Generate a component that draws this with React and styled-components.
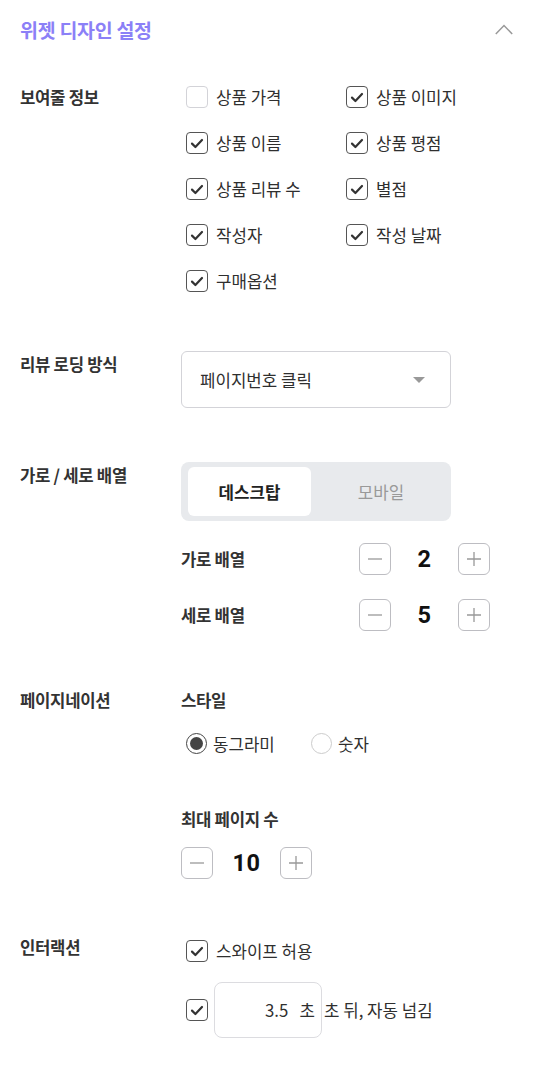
import React from "react";
import styled, { createGlobalStyle } from "styled-components";

const Global = createGlobalStyle`
  html, body { margin: 0; padding: 0; background: #fff; }
  body { font-family: "Noto Sans CJK KR", "Noto Sans", sans-serif; color: #333; }
  * { box-sizing: border-box; }
`;

const Page = styled.div`
  width: 536px;
  padding: 0 20px 40px 20px;
`;

const Header = styled.div`
  height: 60px;
  display: flex;
  align-items: center;
  justify-content: space-between;
`;

const Title = styled.h2`
  margin: 0;
  font-size: 19.5px;
  font-weight: 700;
  line-height: 24px;
  color: #8b80f7;
  letter-spacing: -0.3px;
`;

const Chevron = styled.svg`
  margin-right: 3px;
  margin-top: -2px;
`;

const Section = styled.section`
  display: grid;
  grid-template-columns: 161px 1fr;
  margin-top: ${(p) => p.$mt}px;
`;

const SectionLabel = styled.div`
  font-size: 16.7px;
  font-weight: 700;
  line-height: 22px;
  color: #333;
  margin-top: ${(p) => p.$mt || 0}px;
  letter-spacing: -0.3px;
  white-space: nowrap;
`;

const Content = styled.div`
  display: flex;
  flex-direction: column;
`;

const CheckGrid = styled.div`
  display: grid;
  grid-template-columns: 160px 160px;
  row-gap: 24px;
  padding-left: 5px;
`;

const CheckItem = styled.label`
  display: flex;
  align-items: center;
  gap: 8px;
  height: 22px;
  font-size: 16.8px;
  line-height: 22px;
  color: #2f2f2f;
  white-space: nowrap;
`;

const Box = styled.span`
  width: 22px;
  height: 22px;
  flex: none;
  border-radius: 4px;
  border: ${(p) => (p.$checked ? "1.5px solid #555" : "1px solid #d3d3d8")};
  display: flex;
  align-items: center;
  justify-content: center;
  background: #fff;
`;

function Checkbox({ checked }) {
  return (
    <Box $checked={checked}>
      {checked && (
        <svg width="14" height="11" viewBox="0 0 14 11">
          <path d="M2 5.6 L5.4 9 L12 2" fill="none" stroke="#333" strokeWidth="2.2" strokeLinecap="round" strokeLinejoin="round" />
        </svg>
      )}
    </Box>
  );
}

const Select = styled.div`
  width: 270px;
  height: 57px;
  border: 1px solid #d3d3d8;
  border-radius: 6px;
  display: flex;
  align-items: center;
  justify-content: space-between;
  padding: 0 25px 0 18px;
  font-size: 16.8px;
  color: #2f2f2f;
`;

const Caret = styled.span`
  width: 0;
  height: 0;
  border-left: 6px solid transparent;
  border-right: 6px solid transparent;
  border-top: 6px solid #999;
`;

const Segmented = styled.div`
  width: 270px;
  height: 59px;
  background: #e8eaed;
  border-radius: 8px;
  padding: 5px 0 5px 7px;
  display: grid;
  grid-template-columns: 123px 1fr;
`;

const SegButton = styled.div`
  display: flex;
  align-items: center;
  justify-content: center;
  border-radius: 6px;
  font-size: 16.8px;
  background: ${(p) => (p.$active ? "#fff" : "transparent")};
  color: ${(p) => (p.$active ? "#222" : "#999")};
  font-weight: ${(p) => (p.$active ? 700 : 400)};
`;

const StepperRows = styled.div`
  display: flex;
  flex-direction: column;
  gap: 24px;
  margin-top: 22px;
`;

const StepperRow = styled.div`
  display: grid;
  grid-template-columns: 178px auto;
  align-items: center;
`;

const SubLabel = styled.div`
  font-size: 16.7px;
  font-weight: 700;
  line-height: 22px;
  color: #333;
  letter-spacing: -0.3px;
  margin-top: ${(p) => p.$mt || 0}px;
`;

const StepperWrap = styled.div`
  display: flex;
  align-items: center;
  margin-top: ${(p) => p.$mt || 0}px;
`;

const StepBtn = styled.button`
  width: 32px;
  height: 32px;
  padding: 0;
  border: 1px solid #bdbdc2;
  border-radius: 6px;
  background: #fff;
  display: flex;
  align-items: center;
  justify-content: center;
`;

const StepValue = styled.div`
  width: 67px;
  text-align: center;
  font-family: Roboto, "Noto Sans CJK KR", sans-serif;
  font-size: 23.5px;
  font-weight: 700;
  letter-spacing: 0.6px;
  color: #111;
  line-height: 32px;
`;

function Stepper({ value, mt }) {
  return (
    <StepperWrap $mt={mt}>
      <StepBtn>
        <svg width="18" height="18" viewBox="0 0 18 18">
          <path d="M2 9 H16" stroke="#999" strokeWidth="1.3" />
        </svg>
      </StepBtn>
      <StepValue>{value}</StepValue>
      <StepBtn>
        <svg width="18" height="18" viewBox="0 0 18 18">
          <path d="M2 9 H16 M9 2 V16" stroke="#999" strokeWidth="1.3" />
        </svg>
      </StepBtn>
    </StepperWrap>
  );
}

const RadioRow = styled.div`
  display: grid;
  grid-template-columns: 125px auto;
  padding-left: 5px;
  margin-top: 22px;
`;

const RadioItem = styled.label`
  display: flex;
  align-items: center;
  gap: 6px;
  height: 21px;
  font-size: 16.8px;
  color: #2f2f2f;
`;

const RadioCircle = styled.span`
  width: 21px;
  height: 21px;
  border-radius: 50%;
  flex: none;
  border: ${(p) => (p.$checked ? "1.5px solid #444" : "1px solid #ccc")};
  display: flex;
  align-items: center;
  justify-content: center;
  &::after {
    content: "";
    display: ${(p) => (p.$checked ? "block" : "none")};
    width: 13px;
    height: 13px;
    border-radius: 50%;
    background: #444;
  }
`;

const InteractionList = styled.div`
  display: flex;
  flex-direction: column;
  gap: 20px;
  padding-left: 5px;
`;

const AutoRow = styled.div`
  display: flex;
  align-items: center;
  gap: 6px;
  font-size: 16.8px;
  color: #2f2f2f;
`;

const SecInput = styled.div`
  width: 108px;
  height: 56px;
  border: 1px solid #dcdce0;
  border-radius: 8px;
  display: flex;
  align-items: center;
  justify-content: flex-end;
  padding-right: 6px;
  font-size: 16.8px;
  color: #2f2f2f;
  white-space: pre;
`;

const AfterText = styled.span`
  margin-left: -4px;
  white-space: nowrap;
`;

export default function App() {
  return (
    <Page>
      <Global />
      <Header>
        <Title>위젯 디자인 설정</Title>
        <Chevron width="18" height="11" viewBox="0 0 18 11">
          <path d="M0.8 10 L9 1.6 L17.2 10" fill="none" stroke="#999" strokeWidth="1.5" />
        </Chevron>
      </Header>

      <Section $mt={26}>
        <SectionLabel>보여줄 정보</SectionLabel>
        <Content>
          <CheckGrid>
            <CheckItem><Checkbox />상품 가격</CheckItem>
            <CheckItem><Checkbox checked />상품 이미지</CheckItem>
            <CheckItem><Checkbox checked />상품 이름</CheckItem>
            <CheckItem><Checkbox checked />상품 평점</CheckItem>
            <CheckItem><Checkbox checked />상품 리뷰 수</CheckItem>
            <CheckItem><Checkbox checked />별점</CheckItem>
            <CheckItem><Checkbox checked />작성자</CheckItem>
            <CheckItem><Checkbox checked />작성 날짜</CheckItem>
            <CheckItem><Checkbox checked />구매옵션</CheckItem>
          </CheckGrid>
        </Content>
      </Section>

      <Section $mt={59}>
        <SectionLabel $mt={2}>리뷰 로딩 방식</SectionLabel>
        <Content>
          <Select>
            <span>페이지번호 클릭</span>
            <Caret />
          </Select>
        </Content>
      </Section>

      <Section $mt={54}>
        <SectionLabel $mt={2}>가로 / 세로 배열</SectionLabel>
        <Content>
          <Segmented>
            <SegButton $active>데스크탑</SegButton>
            <SegButton>모바일</SegButton>
          </Segmented>
          <StepperRows>
            <StepperRow>
              <SubLabel>가로 배열</SubLabel>
              <Stepper value="2" />
            </StepperRow>
            <StepperRow>
              <SubLabel>세로 배열</SubLabel>
              <Stepper value="5" />
            </StepperRow>
          </StepperRows>
        </Content>
      </Section>

      <Section $mt={58}>
        <SectionLabel>페이지네이션</SectionLabel>
        <Content>
          <SubLabel>스타일</SubLabel>
          <RadioRow>
            <RadioItem><RadioCircle $checked />동그라미</RadioItem>
            <RadioItem><RadioCircle />숫자</RadioItem>
          </RadioRow>
          <SubLabel $mt={54}>최대 페이지 수</SubLabel>
          <Stepper value="10" mt={17} />
        </Content>
      </Section>

      <Section $mt={61}>
        <SectionLabel $mt={-4}>인터랙션</SectionLabel>
        <Content>
          <InteractionList>
            <CheckItem><Checkbox checked />스와이프 허용</CheckItem>
            <AutoRow>
              <Checkbox checked />
              <SecInput>{"3.5   초"}</SecInput>
              <AfterText>초 뒤, 자동 넘김</AfterText>
            </AutoRow>
          </InteractionList>
        </Content>
      </Section>
    </Page>
  );
}
